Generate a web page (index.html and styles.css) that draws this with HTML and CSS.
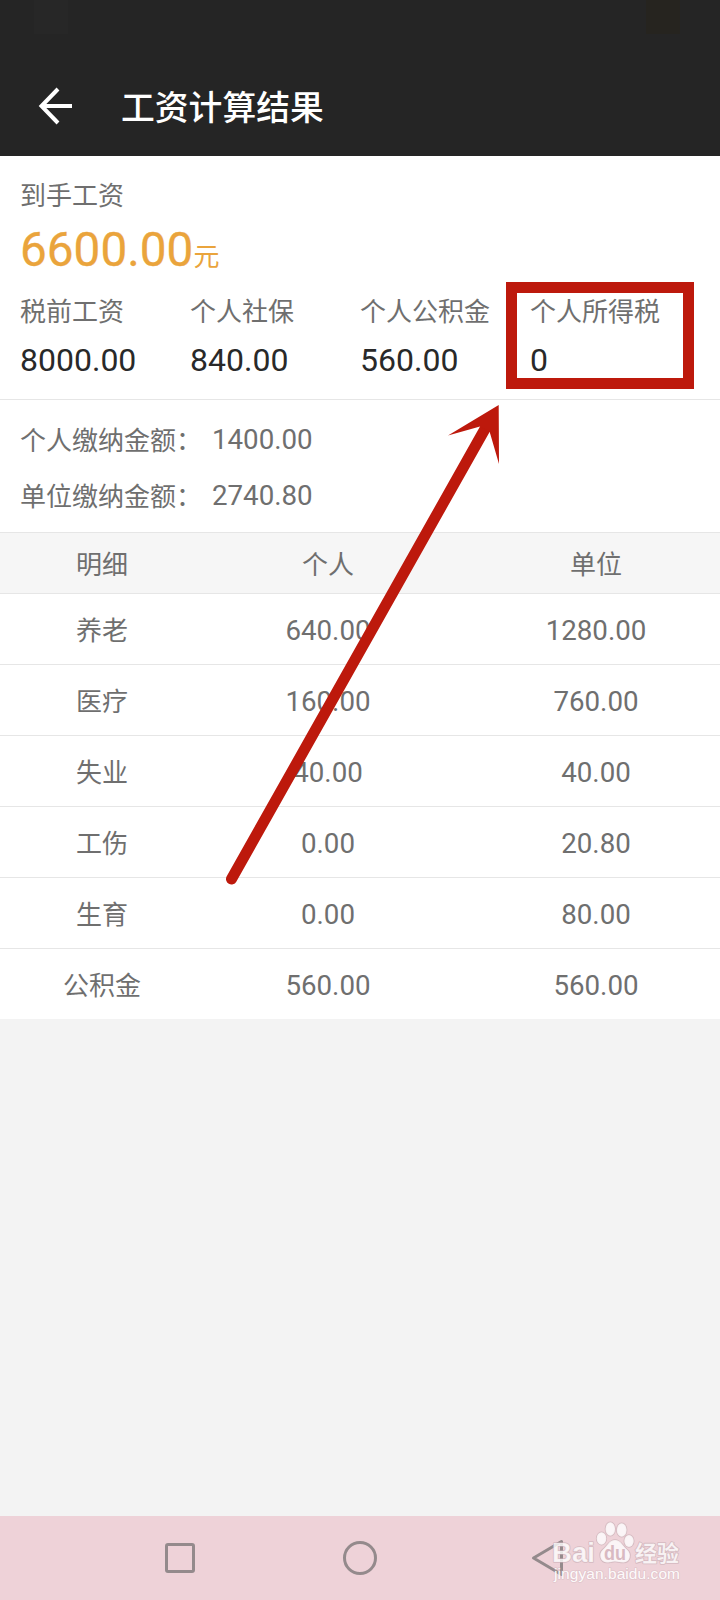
FILE: index.html
```html
<!DOCTYPE html>
<html lang="zh-CN">
<head>
<meta charset="utf-8">
<title>工资计算结果</title>
<link rel="stylesheet" href="styles.css">
</head>
<body>
<div class="screen">
  <header class="header">
    <div class="status"><span class="status-left"></span><span class="status-right"></span></div>
    <div class="toolbar">
      <svg class="back" width="36" height="38" viewBox="0 0 36 38" fill="none" stroke="#fff" stroke-width="4"><path d="M20 2 3.500 19 20 36M3.500 19H34"/></svg>
      <h1 class="title">工资计算结果</h1>
    </div>
  </header>
  <section class="summary">
    <div class="label">到手工资</div>
    <div class="net"><span class="net-number">6600.00</span><span class="net-unit">元</span></div>
    <div class="figures">
      <div><div class="label">税前工资</div><div class="value">8000.00</div></div>
      <div><div class="label">个人社保</div><div class="value">840.00</div></div>
      <div><div class="label">个人公积金</div><div class="value">560.00</div></div>
      <div><div class="label">个人所得税</div><div class="value">0</div></div>
    </div>
  </section>
  <section class="payments">
    <div class="payment"><span class="payment-label">个人缴纳金额：</span><span class="num">1400.00</span></div>
    <div class="payment"><span class="payment-label">单位缴纳金额：</span><span class="num">2740.80</span></div>
  </section>
  <section class="table">
    <div class="row head"><span>明细</span><span>个人</span><span>单位</span></div>
    <div class="row"><span>养老</span><span class="num">640.00</span><span class="num">1280.00</span></div>
    <div class="row"><span>医疗</span><span class="num">160.00</span><span class="num">760.00</span></div>
    <div class="row"><span>失业</span><span class="num">40.00</span><span class="num">40.00</span></div>
    <div class="row"><span>工伤</span><span class="num">0.00</span><span class="num">20.80</span></div>
    <div class="row"><span>生育</span><span class="num">0.00</span><span class="num">80.00</span></div>
    <div class="row"><span>公积金</span><span class="num">560.00</span><span class="num">560.00</span></div>
  </section>
  <footer class="nav">
    <svg width="720" height="84" viewBox="0 1516 720 84">
      <g fill="none" stroke="#948a8c" stroke-width="3">
        <rect x="166.500" y="1544.500" width="27" height="27" rx="1.500"/>
        <circle cx="360" cy="1558" r="15.500"/>
        <path d="M533.500 1558 561.500 1541.500V1574.500Z" stroke-linejoin="round"/>
      </g>
      <g class="watermark">
        <text class="wm-bai" x="552" y="1562" textLength="43" lengthAdjust="spacingAndGlyphs">Bai</text>
        <ellipse cx="601.500" cy="1538.500" rx="4.800" ry="6.200"/>
        <ellipse cx="610.300" cy="1529" rx="4.800" ry="6.700"/>
        <ellipse cx="621.700" cy="1530" rx="4.900" ry="6.700"/>
        <ellipse cx="629" cy="1541" rx="4.700" ry="6"/>
        <path d="M615 1540C609 1540 607.500 1546 603 1549.500C598 1553.500 600 1562.500 607 1562.500C611 1562.500 612 1561.500 615 1561.500S619.500 1562.500 623.500 1562.500C630.500 1562.500 632 1553.500 627 1549.500C622.500 1546 621 1540 615 1540Z"/>
        <text class="wm-du" x="604" y="1560" textLength="22" lengthAdjust="spacingAndGlyphs">du</text>
        <text class="wm-cjk" x="635" y="1560.500" textLength="44">经验</text>
        <text class="wm-url" x="554" y="1579" textLength="126">jingyan.baidu.com</text>
      </g>
    </svg>
  </footer>
  <svg class="annotation" width="720" height="1600" viewBox="0 0 720 1600">
    <rect x="511.500" y="287.500" width="177" height="96" fill="none" stroke="#bd190c" stroke-width="11"/>
    <path d="M485.500 428 231.500 879" stroke="#bd190c" stroke-width="11" stroke-linecap="round"/>
    <path d="M498.700 405 448 435.500 480 426.500 489.700 432 499 464Z" fill="#bd190c"/>
  </svg>
</div>
</body>
</html>
```
FILE: styles.css
```css
* { box-sizing: border-box; }
body {
  margin: 0;
  font-family: "Noto Sans CJK SC", sans-serif;
  font-size: 26px;
  color: #6f6f6f;
}
.screen {
  position: relative;
  display: flex;
  flex-direction: column;
  width: 720px;
  height: 1600px;
  overflow: hidden;
  background: #f3f3f3;
}
.header { height: 156px; background: #252525; }
.status {
  display: flex;
  justify-content: space-between;
  height: 58px;
  padding: 0 40px 0 34px;
}
.status-left, .status-right { width: 34px; height: 34px; background: #272727; }
.status-right { background: #26241f; }
.toolbar { display: flex; align-items: center; height: 98px; padding-left: 38px; }
.back { margin-top: -2px; }
.title {
  margin: -2px 0 0 47px;
  font-size: 33.800px;
  font-weight: 500;
  line-height: 50px;
  color: #fff;
}
.summary {
  height: 244px;
  padding: 19px 20px 0;
  background: #fff;
  border-bottom: 1px solid #e6e6e6;
}
.label { height: 38px; line-height: 38px; white-space: nowrap; }
.net { display: flex; align-items: baseline; height: 78px; padding-top: 2px; line-height: 68px; color: #eaa43c; }
.net-number { font: 400 47.700px/70px Roboto, sans-serif; -webkit-text-stroke: 0.3px #eaa43c; }
.net-unit { font-size: 26px; }
.figures { display: grid; grid-template-columns: repeat(4, 170px); }
.value { padding-top: 1px; font: 400 32px/60px Roboto, sans-serif; color: #292929; }
.payments { height: 133px; padding-top: 11px; background: #fff; border-bottom: 1px solid #e6e6e6; }
.payment { display: flex; align-items: center; height: 56px; padding-left: 20px; }
.payment-label { width: 192px; padding-bottom: 2px; }
.num { font-family: Roboto, sans-serif; font-size: 27.700px; }
.row {
  display: grid;
  grid-template-columns: 204px 248px 268px;
  align-items: center;
  height: 71px;
  padding-bottom: 2px;
  background: #fff;
  border-bottom: 1px solid #e6e6e6;
  text-align: center;
}
.row .num { padding-top: 4px; }
.row span:last-child { padding-left: 20px; }
.row:last-child { height: 70px; border-bottom: 0; }
.row.head { height: 61px; background: #f6f6f6; }
.nav { height: 84px; margin-top: auto; background: #eed2d8; }
.nav svg { display: block; }
.annotation { position: absolute; left: 0; top: 0; }
.watermark {
  fill: #fff;
  fill-opacity: 0.78;
  stroke: #c9aeb5;
  stroke-opacity: 0.7;
  stroke-width: 1.600px;
  stroke-linejoin: round;
  paint-order: stroke;
}
.wm-bai { font: 700 28px "Liberation Sans", sans-serif; }
.wm-du { font: 700 20px "Liberation Sans", sans-serif; fill: #d9b9c1; fill-opacity: 1; stroke: none; }
.wm-cjk { font: 700 22px "Noto Sans CJK SC", sans-serif; }
.wm-url { font: 400 15.500px "Liberation Sans", sans-serif; fill-opacity: 0.95; stroke-opacity: 0.35; }
```
